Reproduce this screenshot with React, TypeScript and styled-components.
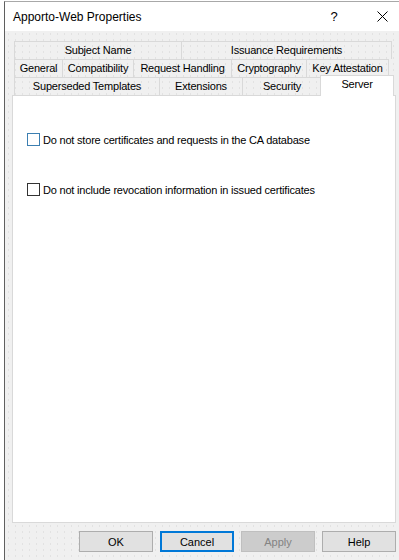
import styled, { createGlobalStyle, css } from "styled-components"

const GlobalStyle = createGlobalStyle`
  html, body {
    margin: 0;
    padding: 0;
    background: #ffffff;
  }
  body {
    font-family: "Segoe UI", "Liberation Sans", Arial, sans-serif;
    color: #000000;
  }
`

const tabRows = [
  [
    { label: "Subject Name", width: 168 },
    { label: "Issuance Requirements", width: 211 },
  ],
  [
    { label: "General", width: 49 },
    { label: "Compatibility", width: 72 },
    { label: "Request Handling", width: 99 },
    { label: "Cryptography", width: 76 },
    { label: "Key Attestation", width: 83 },
  ],
  [
    { label: "Superseded Templates", width: 146 },
    { label: "Extensions", width: 84 },
    { label: "Security", width: 80 },
    { label: "Server", width: 74, selected: true },
  ],
]

const options = [
  { label: "Do not store certificates and requests in the CA database", focused: true },
  { label: "Do not include revocation information in issued certificates" },
]

const App = () => {
  return (
    <>
      <GlobalStyle />
      <Window>
        <TitleBar>
          <Title>Apporto-Web Properties</Title>
          <HelpGlyph>?</HelpGlyph>
          <CloseButton>
            <svg width="11" height="11" viewBox="0 0 11 11">
              <path d="M0.5 0.5 L10.5 10.5 M10.5 0.5 L0.5 10.5" stroke="#000" strokeWidth="1" />
            </svg>
          </CloseButton>
        </TitleBar>
        <Body>
          <Tabs>
            {tabRows.map((row, i) => (
              <TabRow key={i}>
                {row.map((tab) => (
                  <Tab key={tab.label} $width={tab.width} $selected={!!(tab as any).selected}>
                    {tab.label}
                  </Tab>
                ))}
              </TabRow>
            ))}
          </Tabs>
          <Panel>
            {options.map((opt) => (
              <CheckRow key={opt.label}>
                <CheckBox $focused={!!opt.focused} />
                <CheckLabel>{opt.label}</CheckLabel>
              </CheckRow>
            ))}
          </Panel>
          <Footer>
            <Button>OK</Button>
            <Button $default>Cancel</Button>
            <Button $disabled>Apply</Button>
            <Button>Help</Button>
          </Footer>
        </Body>
      </Window>
    </>
  )
}

export default App

const Window = styled.div`
  width: 394px;
  height: 558px;
  margin: 1px 0 0 4px;
  border-left: 1px solid #5f5f5f;
  border-top: 1px solid #a8a8a8;
  display: flex;
  flex-direction: column;
`
const TitleBar = styled.div`
  height: 29px;
  background: #ffffff;
  display: flex;
  align-items: center;
  padding-left: 8px;
`
const Title = styled.div`
  font-size: 12px;
  flex: 1;
  padding-top: 1px;
`
const HelpGlyph = styled.div`
  font-size: 13px;
  width: 62px;
  text-align: center;
`
const CloseButton = styled.div`
  width: 34px;
  display: flex;
  justify-content: center;
  align-items: center;
`
const Body = styled.div`
  flex: 1;
  background-color: #f0f0f0;
  background-image: radial-gradient(circle, #e2e2e2 0.7px, transparent 0.9px);
  background-size: 7px 6px;
  padding: 10px 3px 0 7px;
  display: flex;
  flex-direction: column;
`
const Tabs = styled.div`
  display: flex;
  flex-direction: column;
  padding-left: 2px;
`
const TabRow = styled.div`
  display: flex;
  height: 18px;
  align-items: flex-end;
`
const Tab = styled.div<{ $width: number; $selected: boolean }>`
  box-sizing: border-box;
  width: ${(p) => p.$width}px;
  height: 18px;
  border: 1px solid #d9d9d9;
  border-bottom: none;
  margin-right: -1px;
  font-size: 11px;
  letter-spacing: -0.2px;
  line-height: 17px;
  text-align: center;
  white-space: nowrap;
  ${(p) =>
    p.$selected &&
    css`
      position: relative;
      z-index: 1;
      height: 21px;
      margin-bottom: -1px;
      margin-left: -1px;
      background: #ffffff;
      line-height: 17px;
    `}
`
const Panel = styled.div`
  box-sizing: border-box;
  width: 384px;
  height: 428px;
  background: #ffffff;
  border: 1px solid #d9d9d9;
  padding: 36px 0 0 14px;
  display: flex;
  flex-direction: column;
  gap: 35px;
`
const CheckRow = styled.div`
  display: flex;
  align-items: center;
  height: 15px;
`
const CheckBox = styled.div<{ $focused: boolean }>`
  box-sizing: border-box;
  width: 13px;
  height: 13px;
  border: 1px solid ${(p) => (p.$focused ? "#3c7fb1" : "#333333")};
  background: #ffffff;
  margin-right: 3px;
`
const CheckLabel = styled.span`
  font-size: 11px;
  letter-spacing: -0.2px;
`
const Footer = styled.div`
  display: flex;
  justify-content: flex-end;
  gap: 7px;
  margin-top: 8px;
`
const Button = styled.div<{ $default?: boolean; $disabled?: boolean }>`
  box-sizing: border-box;
  width: 74px;
  height: 21px;
  background: #e1e1e1;
  border: 1px solid #adadad;
  font-size: 11px;
  display: flex;
  align-items: center;
  justify-content: center;
  ${(p) =>
    p.$default &&
    css`
      border: 2px solid #0078d7;
    `}
  ${(p) =>
    p.$disabled &&
    css`
      background: #cccccc;
      border-color: #bfbfbf;
      color: #838383;
    `}
`
